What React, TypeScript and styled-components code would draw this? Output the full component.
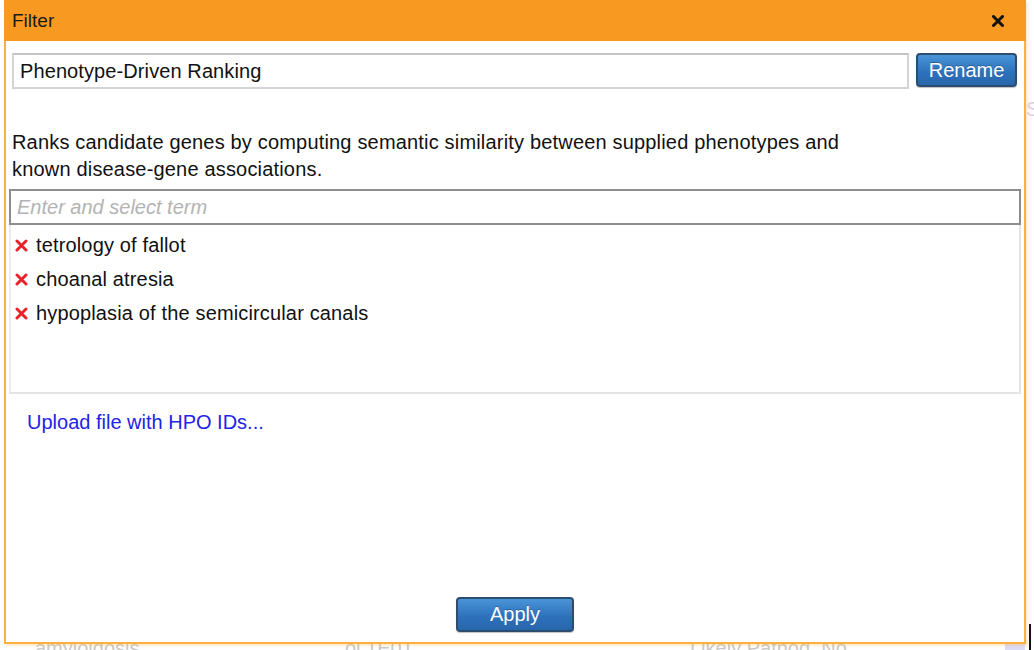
import React from "react";
import styled, { createGlobalStyle } from "styled-components";

const Global = createGlobalStyle`
  html, body { margin: 0; padding: 0; background: #ffffff; }
  body { font-family: "Liberation Sans", Arial, Helvetica, sans-serif; overflow: hidden; }
  * { box-sizing: border-box; }
`;

const Page = styled.div`
  position: relative;
  width: 1034px;
  height: 650px;
  overflow: hidden;
  background: #fff;
`;

const BackTable = styled.div`
  padding-top: 636px;
  display: grid;
  grid-template-columns: 310px 345px 340px;
  padding-left: 35px;
  font-size: 20px;
  line-height: 24px;
  color: #c9c9c9;
`;

const BackCell = styled.div`
  white-space: nowrap;
`;

const SideLetter = styled.div`
  position: absolute;
  left: 1026px;
  top: 98px;
  font-size: 20px;
  color: #d6d6d6;
`;

const Cursor = styled.div`
  position: absolute;
  left: 1029px;
  top: 624px;
  width: 2px;
  height: 26px;
  background: #111;
`;

const Lavender = styled.div`
  position: absolute;
  left: 1005px;
  top: 644px;
  width: 20px;
  height: 6px;
  background: #dcdcf7;
`;

const Dialog = styled.div`
  position: absolute;
  left: 4px;
  top: 0;
  width: 1022px;
  height: 644px;
  border: 2px solid #fbb040;
  border-top: none;
  background: #fff;
  display: flex;
  flex-direction: column;
  box-shadow: 2px 2px 2px rgba(251, 176, 64, 0.25);
`;

const Header = styled.div`
  height: 41px;
  margin: 0 -2px;
  padding: 0 22px 0 8px;
  background: #f89a22;
  display: flex;
  align-items: center;
  justify-content: space-between;
`;

const Title = styled.span`
  font-size: 19px;
  color: #1a1a1a;
  padding-top: 1px;
`;

const CloseBtn = styled.span`
  display: flex;
  width: 12px;
  height: 12px;
`;

const Body = styled.div`
  flex: 1;
  display: flex;
  flex-direction: column;
  padding: 0 3px 10px;
`;

const NameRow = styled.div`
  margin: 12px 4px 0 3px;
  display: flex;
  align-items: flex-start;
  gap: 7px;
`;

const NameInput = styled.div`
  flex: 1;
  height: 36px;
  border: 2px solid #d4d4d4;
  border-top-color: #c4c4c4;
  padding: 0 6px;
  font-size: 20px;
  line-height: 32px;
  color: #111;
  letter-spacing: 0.1px;
`;

const BlueButton = styled.button<{ $w: number; $h: number }>`
  width: ${(p) => p.$w}px;
  height: ${(p) => p.$h}px;
  border: 2px solid #2d4d70;
  border-radius: 4px;
  background: linear-gradient(#4a94d8, #2e72bd 55%, #2766ab);
  color: #fff;
  font-family: "Liberation Sans", Arial, sans-serif;
  font-size: 20px;
  padding: 0;
  text-shadow: 0 -1px 0 rgba(0, 0, 0, 0.25);
  box-shadow: 0 1px 1px rgba(0, 0, 0, 0.25);
`;

const Description = styled.p`
  margin: 40px 0 6px 3px;
  max-width: 870px;
  font-size: 20px;
  line-height: 27px;
  letter-spacing: 0.18px;
  color: #111;
`;

const TermInput = styled.div`
  height: 36px;
  border: 2px solid #8d8d8d;
  padding: 0 6px;
  font-size: 20px;
  line-height: 32px;
  font-style: italic;
  color: #b3b3b3;
`;

const TermList = styled.ul`
  list-style: none;
  margin: 0;
  height: 169px;
  padding: 3px 4px 0;
  border: 2px solid #e4e4e4;
  border-top: none;
  border-left-color: #ececec;
`;

const Term = styled.li`
  display: flex;
  align-items: center;
  gap: 8px;
  height: 34px;
  font-size: 20px;
  letter-spacing: 0.15px;
  color: #111;
`;

const RemoveIcon = styled.svg`
  width: 13px;
  height: 13px;
  flex: none;
`;

const UploadLink = styled.a`
  margin: 15px 0 0 18px;
  font-size: 20px;
  line-height: 27px;
  color: #2323e8;
  text-decoration: none;
  align-self: flex-start;
`;

const Footer = styled.div`
  margin-top: auto;
  display: flex;
  justify-content: center;
`;

const terms = [
  "tetrology of fallot",
  "choanal atresia",
  "hypoplasia of the semicircular canals",
];

export default function App() {
  return (
    <Page>
      <Global />
      <BackTable>
        <BackCell>amyloidosis</BackCell>
        <BackCell>ol 1E0T</BackCell>
        <BackCell>Likely Pathog&nbsp;&nbsp;No</BackCell>
      </BackTable>
      <SideLetter>S</SideLetter>
      <Lavender />
      <Cursor />
      <Dialog>
        <Header>
          <Title>Filter</Title>
          <CloseBtn>
            <svg width="12" height="12" viewBox="0 0 12 12">
              <path d="M1.5 1.5 L10.5 10.5 M10.5 1.5 L1.5 10.5" stroke="#111" strokeWidth="3" strokeLinecap="round" />
            </svg>
          </CloseBtn>
        </Header>
        <Body>
          <NameRow>
            <NameInput>Phenotype-Driven Ranking</NameInput>
            <BlueButton $w={101} $h={34}>Rename</BlueButton>
          </NameRow>
          <Description>
            Ranks candidate genes by computing semantic similarity between supplied phenotypes and known
            disease-gene associations.
          </Description>
          <TermInput>Enter and select term</TermInput>
          <TermList>
            {terms.map((t) => (
              <Term key={t}>
                <RemoveIcon viewBox="0 0 13 13">
                  <path d="M2 2 L11 11 M11 2 L2 11" stroke="#e8232a" strokeWidth="3" strokeLinecap="round" />
                </RemoveIcon>
                {t}
              </Term>
            ))}
          </TermList>
          <UploadLink href="#">Upload file with HPO IDs...</UploadLink>
          <Footer>
            <BlueButton $w={118} $h={35}>Apply</BlueButton>
          </Footer>
        </Body>
      </Dialog>
    </Page>
  );
}
